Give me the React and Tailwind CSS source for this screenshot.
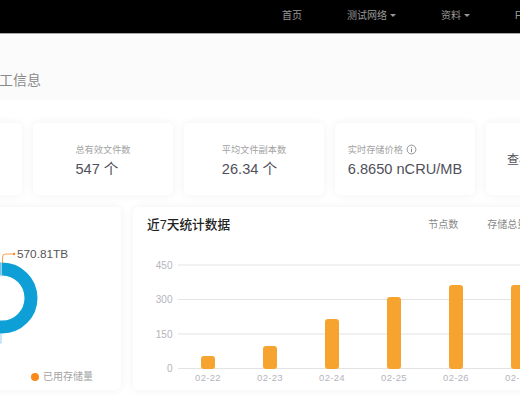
import React from "react";

const FONT = { fontFamily: '"Liberation Sans","Noto Sans CJK SC",sans-serif' };

function Caret() {
  return <span className="ml-[3px] inline-block h-0 w-0 border-x-[3px] border-t-[3px] border-x-transparent border-t-[#999999] align-[2px]" />;
}

function StatCard({ label, value, info }) {
  return (
    <div className="flex h-[72px] w-[140px] shrink-0 items-center justify-center rounded-[5px] bg-white pt-[3px] shadow-[0_0_10px_rgba(0,0,0,0.06)]">
      <div>
        <div className="flex items-center gap-[3px] whitespace-nowrap text-[9.2px] leading-[14px] text-[#a3a3a3]">
          {label}
          {info && (
            <svg width="11" height="11" viewBox="0 0 11 11" className="text-[#777]">
              <circle cx="5.5" cy="5.5" r="4.4" fill="none" stroke="currentColor" strokeWidth="0.8" />
              <path d="M5.5 4.8v3.2M5.5 3v.9" stroke="currentColor" strokeWidth="0.9" />
            </svg>
          )}
        </div>
        <div className="mt-[2px] whitespace-nowrap text-[14.6px] leading-[20px] text-[#50505a]">{value}</div>
      </div>
    </div>
  );
}

function Donut() {
  return (
    <svg width="141" height="163" viewBox="-20 207 141 163" className="block">
      <circle cx="0" cy="298" r="29" fill="none" stroke="#0d9fd6" strokeWidth="13" transform="translate(2 0)" />
      <path d="M0.5 262v15h1.2v-15z" fill="#cfe9f5" />
      <path d="M2.5 263V257q0-3 3-3h8" fill="none" stroke="#f98a1c" strokeWidth="0.8" />
      <circle cx="14" cy="254" r="1.2" fill="#f98a1c" />
      <text x="17" y="258.3" fontSize="11.8" fill="#555">570.81TB</text>
      <path d="M1 333v10h-4" fill="none" stroke="#7cc6e6" strokeWidth="0.8" />
    </svg>
  );
}

function Chart() {
  const bars = [
    ["02-22", 208, 356],
    ["02-23", 270, 346],
    ["02-24", 332, 319],
    ["02-25", 394, 297],
    ["02-26", 456, 285],
    ["02-27", 518, 285],
  ];
  return (
    <svg width="387" height="147" viewBox="133 243 387 147" className="block">
      {[[450, 265], [300, 299.5], [150, 334], [0, 368.5]].map(([v, y]) => (
        <g key={v}>
          <line x1="178" x2="520" y1={y} y2={y} stroke="#e3e3e3" strokeWidth="1" />
          <text x="172.5" y={y + 3.5} textAnchor="end" fontSize="10" fill="#b4b4bc">{v}</text>
        </g>
      ))}
      {bars.map(([l, x, top]) => (
        <g key={l}>
          <rect x={x - 7} y={top} width="14" height={369 - top} rx="3" fill="#f6a42f" />
          <text x={x} y="380.5" textAnchor="middle" fontSize="9.5" letterSpacing="0.3" fill="#b4b4bc">{l}</text>
        </g>
      ))}
    </svg>
  );
}

export default function App() {
  return (
    <div style={FONT} className="h-[400px] w-[520px] overflow-hidden bg-white">
      <header className="flex h-[34px] items-center whitespace-nowrap border-b border-[#a8a8a8] bg-black pb-[2px] pl-[282px] text-[10px] text-[#999999]">
        <span>首页</span>
        <span className="ml-[45px]">测试网络<Caret /></span>
        <span className="ml-[45px]">资料<Caret /></span>
        <span className="ml-[45px]">FAQ</span>
      </header>
      <div className="flex h-[66px] items-center bg-[#fbfbfb] pt-[27px]">
        <h1 className="-ml-[15px] whitespace-nowrap text-[14px] font-normal text-[#8a8a8a]">矿工信息</h1>
      </div>
      <div className="-ml-[118px] mt-[23px] flex w-max gap-[11px]">
        <StatCard label="总存储量" value="570 TB" />
        <StatCard label="总有效文件数" value="547 个" />
        <StatCard label="平均文件副本数" value="26.34 个" />
        <StatCard label="实时存储价格" value="6.8650 nCRU/MB" info />
        <div className="flex h-[72px] w-[140px] shrink-0 items-center rounded-[5px] bg-white pl-[21px] pt-[2px] text-[12px] text-[#50505a] shadow-[0_0_10px_rgba(0,0,0,0.06)]">查看详情</div>
      </div>
      <div className="mt-[12px] flex w-max gap-[12px]">
        <section className="-ml-[20px] h-[183px] w-[141px] rounded-[5px] bg-white shadow-[0_0_10px_rgba(0,0,0,0.06)]">
          <Donut />
          <div className="ml-[51px] flex items-center gap-[4px] whitespace-nowrap text-[10px] leading-[14px] text-[#a3a3a3]">
            <span className="h-[8px] w-[8px] rounded-full bg-[#f98a1c]" />
            已用存储量
          </div>
        </section>
        <section className="h-[183px] w-[420px] rounded-[5px] bg-white shadow-[0_0_10px_rgba(0,0,0,0.06)]">
          <div className="flex h-[36px] items-center whitespace-nowrap pl-[14px]">
            <h2 className="text-[12.7px] font-medium leading-[20px] text-[#222]">近7天统计数据</h2>
            <span className="ml-[198px] text-[10px] leading-[20px] text-[#888]">节点数</span>
            <span className="ml-[29px] text-[10px] leading-[20px] text-[#888]">存储总量</span>
          </div>
          <Chart />
        </section>
      </div>
    </div>
  );
}
